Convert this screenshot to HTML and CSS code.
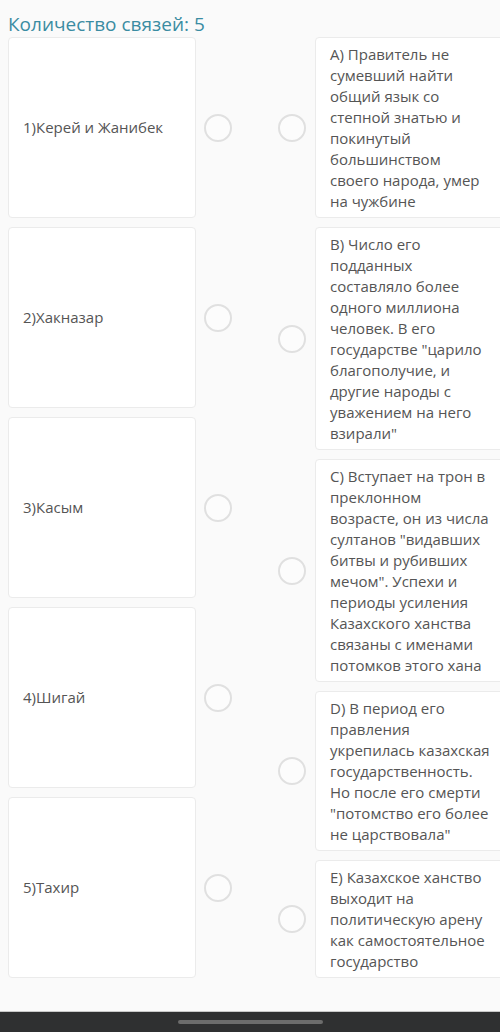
FILE: index.html
```html
<!DOCTYPE html>
<html lang="ru">

<head>
    <meta charset="UTF-8">
    <meta name="viewport" content="width=device-width, initial-scale=1.0">
    <title>Сопоставление</title>
    <link rel="stylesheet" href="styles.css">
</head>

<body>
    <main>
        <h2 class="count-title">Количество связей: 5</h2>

        <div class="board">
            <!-- left column: terms -->
            <div class="column">
                <div class="pair-row">
                    <div class="card term-card">1)Керей и Жанибек</div>
                    <span class="dot"></span>
                </div>
                <div class="pair-row">
                    <div class="card term-card">2)Хакназар</div>
                    <span class="dot"></span>
                </div>
                <div class="pair-row">
                    <div class="card term-card">3)Касым</div>
                    <span class="dot"></span>
                </div>
                <div class="pair-row">
                    <div class="card term-card">4)Шигай</div>
                    <span class="dot"></span>
                </div>
                <div class="pair-row">
                    <div class="card term-card">5)Тахир</div>
                    <span class="dot"></span>
                </div>
            </div>

            <!-- right column: descriptions -->
            <div class="column answers">
                <div class="pair-row">
                    <span class="dot"></span>
                    <div class="card answer-card">А) Правитель не сумевший найти общий язык со степной знатью и покинутый большинством своего народа, умер на чужбине</div>
                </div>
                <div class="pair-row">
                    <span class="dot"></span>
                    <div class="card answer-card">В) Число его подданных составляло более одного миллиона человек. В его государстве "царило благополучие, и другие народы с уважением на него взирали"</div>
                </div>
                <div class="pair-row">
                    <span class="dot"></span>
                    <div class="card answer-card">С) Вступает на трон в преклонном возрасте, он из числа султанов "видавших битвы и рубивших мечом". Успехи и периоды усиления Казахского ханства связаны с именами потомков этого хана</div>
                </div>
                <div class="pair-row">
                    <span class="dot"></span>
                    <div class="card answer-card">D) В период его правления укрепилась казахская государственность. Но после его смерти "потомство его более не царствовала"</div>
                </div>
                <div class="pair-row">
                    <span class="dot"></span>
                    <div class="card answer-card">Е) Казахское ханство выходит на политическую арену как самостоятельное государство</div>
                </div>
            </div>
        </div>
    </main>

    <footer class="nav-bar">
        <span class="home-pill"></span>
    </footer>
</body>

</html>
```

FILE: styles.css
```css
/* matching quiz page */
body {
    font-family: "Open Sans", "Noto Sans", sans-serif;
    margin: 0;
    padding: 0;
    background-color: #fafafa;
    color: #555;
    min-height: 100vh;
    display: flex;
    flex-direction: column;
    overflow: hidden;
}

main {
    flex: 1;
}

.count-title {
    margin: 0;
    padding: 11px 0 0 8px;
    font-size: 19px;
    line-height: 26px;
    font-weight: 400;
    color: #3a8ca2;
}

.board {
    display: flex;
    align-items: flex-start;
    padding-left: 8px;
    gap: 46px;
}

.column {
    display: flex;
    flex-direction: column;
    gap: 9px;
}

.pair-row {
    display: flex;
    align-items: center;
    gap: 8px;
}

.answers .pair-row {
    gap: 9px;
}

.card {
    background-color: #fff;
    border: 1px solid #ebebeb;
    border-radius: 4px;
    font-size: 15px;
    line-height: 21px;
    box-sizing: border-box;
}

.term-card {
    width: 188px;
    height: 181px;
    padding: 0 14px;
    display: flex;
    align-items: center;
}

.answer-card {
    width: 192px;
    padding: 6px 14px 5px 14px;
    flex-shrink: 0;
}

/* empty link point */
.dot {
    width: 28px;
    height: 28px;
    box-sizing: border-box;
    border: 2px solid #e0e0e0;
    border-radius: 50%;
    background-color: #fcfcfc;
    flex-shrink: 0;
}

.nav-bar {
    height: 20px;
    background-color: #2f3031;
    border-top: 1px solid #c8c8c8;
    display: flex;
    align-items: center;
    justify-content: center;
}

.home-pill {
    width: 145px;
    height: 4px;
    border-radius: 2px;
    background-color: #6c6c6c;
}
```
